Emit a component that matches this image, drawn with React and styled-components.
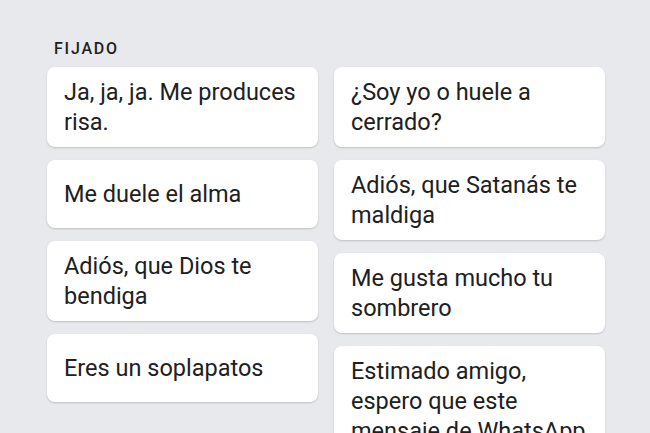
import React from "react";
import styled, { createGlobalStyle } from "styled-components";

const Global = createGlobalStyle`
  html, body { margin: 0; padding: 0; background: #e8e9ed; }
  body { font-family: Roboto, "Noto Sans", "Liberation Sans", sans-serif; -webkit-font-smoothing: antialiased; }
`;

const Page = styled.div`
  height: 433px;
  overflow: hidden;
  padding: 39px 0 0 47px;
  box-sizing: border-box;
`;

const Label = styled.div`
  font-size: 16px;
  font-weight: 500;
  letter-spacing: 1.8px;
  color: #1f1f1f;
  line-height: 20px;
  margin: 0 0 8px 7px;
`;

const Columns = styled.div`
  display: flex;
  gap: 16px;
  align-items: flex-start;
`;

const Column = styled.div`
  width: 271px;
  display: flex;
  flex-direction: column;
  gap: 13px;
`;

const Card = styled.div`
  background: #ffffff;
  border-radius: 8px;
  box-shadow: 0 1px 2px rgba(0, 0, 0, 0.18);
  min-height: 68px;
  box-sizing: border-box;
  padding: 10px 17px;
  display: flex;
  align-items: center;
  font-size: 23.5px;
  line-height: 30px;
  color: #202020;
`;

const left = [
  "Ja, ja, ja. Me produces risa.",
  "Me duele el alma",
  "Adiós, que Dios te bendiga",
  "Eres un soplapatos",
];
const right = [
  "¿Soy yo o huele a cerrado?",
  "Adiós, que Satanás te maldiga",
  "Me gusta mucho tu sombrero",
  "Estimado amigo, espero que este mensaje de WhatsApp te encuentre bien",
];

export default function App() {
  return (
    <Page>
      <Global />
      <Label>FIJADO</Label>
      <Columns>
        <Column>
          {left.map((t) => (
            <Card key={t}>{t}</Card>
          ))}
        </Column>
        <Column>
          {right.map((t) => (
            <Card key={t}>{t}</Card>
          ))}
        </Column>
      </Columns>
    </Page>
  );
}
